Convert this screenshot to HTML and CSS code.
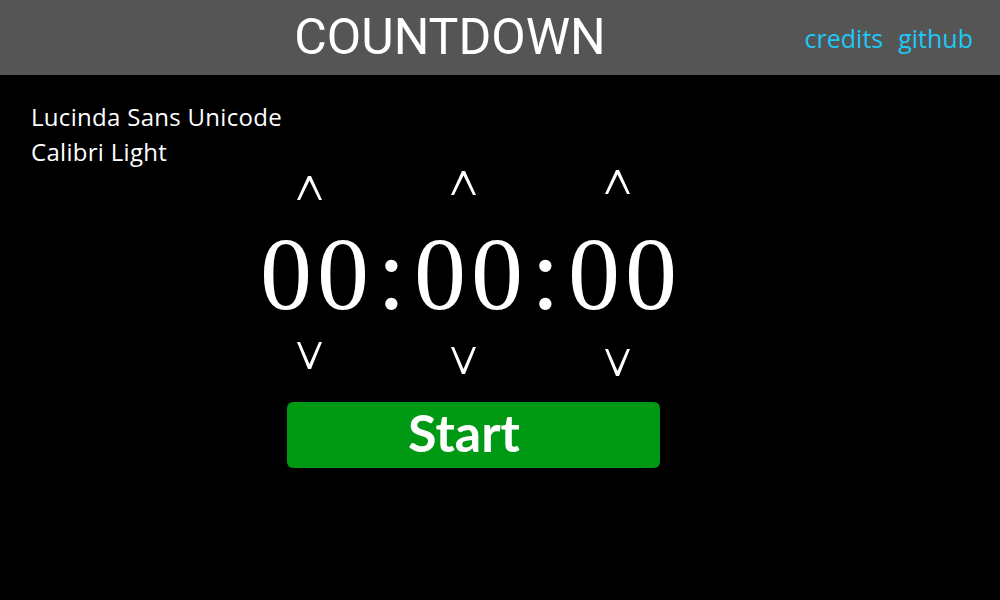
FILE: index.html
```html
<!DOCTYPE html>
<html>
<head>
<meta charset="utf-8">
<title>Countdown</title>
<link rel="stylesheet" href="styles.css">
</head>
<body>
<header class="topbar">
  <h1 class="title">COUNTDOWN</h1>
  <nav class="links"><a href="#">credits</a><a href="#">github</a></nav>
</header>
<main class="main">
  <div class="fonts">
    <div>Lucinda Sans Unicode</div>
    <div>Calibri Light</div>
  </div>
  <section class="timer">
    <div class="clock">
      <svg class="arrow up c1" viewBox="0 0 25 24" width="25" height="24"><polygon points="0,24 11,0 14,0 25,24 22,24 12.5,4.5 3,24"/></svg>
      <svg class="arrow up c3" viewBox="0 0 25 24" width="25" height="24"><polygon points="0,24 11,0 14,0 25,24 22,24 12.5,4.5 3,24"/></svg>
      <svg class="arrow up c5" viewBox="0 0 25 24" width="25" height="24"><polygon points="0,24 11,0 14,0 25,24 22,24 12.5,4.5 3,24"/></svg>
      <span class="digits c1">00</span>
      <span class="colon c2">:</span>
      <span class="digits c3">00</span>
      <span class="colon c4">:</span>
      <span class="digits c5">00</span>
      <svg class="arrow down c1" viewBox="0 0 25 27" width="25" height="27"><polygon points="0,0 11,27 14,27 25,0 22,0 12.5,22 3,0"/></svg>
      <svg class="arrow down c3" viewBox="0 0 25 27" width="25" height="27"><polygon points="0,0 11,27 14,27 25,0 22,0 12.5,22 3,0"/></svg>
      <svg class="arrow down c5" viewBox="0 0 25 27" width="25" height="27"><polygon points="0,0 11,27 14,27 25,0 22,0 12.5,22 3,0"/></svg>
    </div>
    <button class="start">Start</button>
  </section>
</main>
</body>
</html>
```
FILE: styles.css
```css
* { box-sizing: border-box; }
html, body { margin: 0; padding: 0; }
body {
  background: #000;
  color: #fff;
  font-family: "Open Sans", sans-serif;
  width: 1000px;
  height: 600px;
  overflow: hidden;
}
.topbar {
  height: 75px;
  background: #555555;
  display: grid;
  grid-template-columns: 1fr 200px;
  align-items: center;
}
.title {
  margin: 0;
  padding-left: 100px;
  text-align: center;
  font-family: Roboto, sans-serif;
  font-weight: 400;
  font-size: 50px;
  line-height: 75px;
}
.links {
  display: flex;
  justify-content: flex-end;
  gap: 15px;
  padding-right: 27px;
  font-size: 25px;
}
.links a { color: #1ec8f5; text-decoration: none; }
.main { padding: 24px 0 0 31px; }
.fonts { font-size: 24px; line-height: 35px; letter-spacing: 0.3px; }
.timer {
  display: flex;
  flex-direction: column;
  align-items: center;
  padding-right: 94px;
  margin-top: 7px;
}
.clock {
  display: grid;
  grid-template-columns: repeat(5, auto);
  column-gap: 3px;
  justify-items: center;
  align-items: start;
}
.c1 { grid-column: 1; }
.c2 { grid-column: 2; }
.c3 { grid-column: 3; }
.c4 { grid-column: 4; }
.c5 { grid-column: 5; }
.up { grid-row: 1; margin: 0 10px 22px 0; }
.up.c3 { margin: -5px 10px 27px 0; }
.up.c5 { margin: -6px 10px 28px 0; }
.digits, .colon { grid-row: 2; }
.down { grid-row: 3; margin: 16px 10px 0 0; }
.down.c3 { margin-top: 21px; }
.down.c5 { margin-top: 23px; }
.arrow { fill: #fff; display: block; }
.digits, .colon {
  font-family: "Liberation Serif", serif;
  font-size: 104px;
  line-height: 104px;
}
.digits {
  letter-spacing: 5px;
  padding-left: 5px;
}
.start {
  margin: 26px 0 0 10px;
  width: 373px;
  height: 66px;
  background: #009914;
  color: #fff;
  border: none;
  border-radius: 6px;
  font-family: Lato, sans-serif;
  font-weight: 700;
  font-size: 52px;
  line-height: 60px;
  padding: 0 19px 6px 0;
}
```
